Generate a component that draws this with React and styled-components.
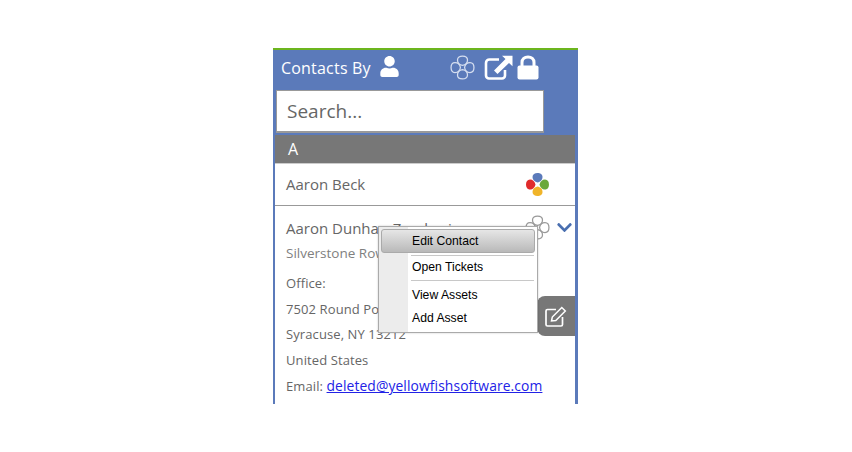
import styled, { createGlobalStyle } from "styled-components";
import { FaUser, FaChevronDown } from "react-icons/fa";

const GlobalStyle = createGlobalStyle`
  html, body {
    margin: 0;
    background: #fff;
    font-family: "Open Sans", sans-serif;
  }
`;

const Page = styled.div`
  width: 852px;
  height: 452px;
  padding: 48px 0 0 273px;
  box-sizing: border-box;
  overflow: hidden;
`;

const Panel = styled.div`
  position: relative;
  width: 305px;
  height: 356px;
  box-sizing: border-box;
  background: #5b7aba;
  border-top: 2px solid #6cb51e;
  padding: 0 3px 0 2px;
  overflow: hidden;
`;

const Header = styled.div`
  display: flex;
  align-items: center;
  height: 37px;
  color: #fff;
  padding: 0 0 1px 6px;
  box-sizing: border-box;
`;

const Title = styled.span`
  font-size: 16px;
  letter-spacing: 0.2px;
  line-height: 20px;
  margin-right: 8px;
`;

const UserWrap = styled.span`
  display: flex;
  margin-top: -4px;
`;

const HeaderIcons = styled.div`
  display: flex;
  align-items: center;
  margin-left: 50px;
  gap: 9px;
  margin-top: -2px;

  svg:last-child {
    margin-left: -5px;
  }
`;

const SearchBox = styled.input`
  display: block;
  width: 268px;
  height: 43px;
  margin: 3px 0 0 1px;
  box-sizing: border-box;
  border: 1px solid #999;
  border-width: 1px 1px 2px 1px;
  background: #fff;
  padding: 0 10px;
  font-family: "Open Sans", sans-serif;
  font-size: 19px;
  color: #555;
  outline: none;

  &::placeholder {
    color: #666;
    opacity: 1;
  }
`;

const SectionHeader = styled.div`
  height: 28px;
  margin-top: 2px;
  background: #777;
  color: #fff;
  font-size: 16px;
  font-weight: 500;
  line-height: 29px;
  padding-left: 13px;
`;

const List = styled.div`
  background: #fff;
  height: 242px;
  border-top: 1px solid #ccc;
`;

const ContactRow = styled.div`
  display: flex;
  align-items: center;
  justify-content: space-between;
  height: 42px;
  box-sizing: border-box;
  padding: ${(p) => (p.$divider ? "0 0 1px 11px" : "1px 2px 0 11px")};
  border-bottom: ${(p) => (p.$divider ? "1px solid #999" : "none")};
`;

const Name = styled.span`
  font-size: 15px;
  color: #666;
`;

const RowIcons = styled.div`
  display: flex;
  align-items: center;
  gap: 6px;
  padding-right: ${(p) => p.$pad || 0}px;
  color: #4a6fb0;
`;

const Details = styled.div`
  padding: 0 11px;
  margin-top: -5px;
`;

const Company = styled.div`
  font-size: 13.5px;
  line-height: 20px;
  color: #808080;
  margin-bottom: 8px;
`;

const DetailLine = styled.div`
  font-size: 13px;
  letter-spacing: 0.1px;
  line-height: 25.6px;
  color: #666;
  white-space: nowrap;
`;

const EmailLink = styled.a`
  font-size: 13.85px;
  color: #2222e6;
  text-decoration: underline;
`;

const Menu = styled.div`
  position: absolute;
  left: 105px;
  top: 176px;
  width: 160px;
  height: 107px;
  box-sizing: border-box;
  border: 1px solid #aaa;
  background: linear-gradient(to right, #ececec 0, #ececec 29px, #fff 29px);
  font-family: "Liberation Sans", Arial, sans-serif;
  font-size: 12.2px;
  color: #000;
  box-shadow: 0 0 2px rgba(0, 0, 0, 0.2);
`;

const MenuItem = styled.div`
  height: ${(p) => (p.$active ? "24px" : "23px")};
  line-height: ${(p) => (p.$active ? "22px" : "23px")};
  box-sizing: border-box;
  padding-left: ${(p) => (p.$active ? "30px" : "33px")};
  ${(p) =>
    p.$active &&
    `
    margin: 2px 2px 0;
    border: 1px solid #aaa;
    border-radius: 3px;
    background: linear-gradient(to bottom, #e6e6e6, #b9b9b9);
  `}
`;

const MenuDivider = styled.div`
  height: 1px;
  margin: ${(p) => p.$margin};
  margin-left: 32px;
  margin-right: 3px;
  background: #c8c8c8;
`;

const EditTab = styled.div`
  position: absolute;
  right: 3px;
  top: 246px;
  width: 38px;
  height: 40px;
  display: flex;
  align-items: center;
  justify-content: center;
  background: #777;
  border-radius: 8px 0 0 8px;
`;

const petal = "M12 10C9.200 9.600 7.200 7.400 7.200 4.800 7.200 2.200 9.400 1 12 1s4.800 1.200 4.800 3.800C16.800 7.400 14.800 9.600 12 10Z";

function Clover({ size = 24, colors, stroke }) {
  const fills = colors || ["none", "none", "none", "none"];
  return (
    <svg width={size} height={size} viewBox="0 0 24 24">
      <g stroke={stroke || "none"} strokeWidth={stroke ? 1.2 : 0}>
        {fills.map((fill, i) => (
          <path key={i} fill={fill} d={petal} transform={`rotate(${i * 90} 12 12)`} />
        ))}
      </g>
    </svg>
  );
}

function ExternalIcon() {
  return (
    <svg width="29" height="25" viewBox="0 0 29 25" fill="none">
      <path d="M15 4.500H5.500A3.500 3.500 0 0 0 2 8v12.500A3 3 0 0 0 5 23.500h13a3 3 0 0 0 3-3V15" stroke="#fff" strokeWidth="2.600" />
      <path d="M18 0.800H28.500V11.300L25 8 13.500 19 10 15.500 21.500 4Z" fill="#fff" />
    </svg>
  );
}

function LockIcon() {
  return (
    <svg width="22" height="25" viewBox="0 0 22 25" fill="none">
      <path d="M5 11V7.500C5 4 7.500 2 11 2s6 2 6 5.500V11" stroke="#fff" strokeWidth="3" />
      <rect x="0.500" y="10.500" width="21" height="14" rx="2" fill="#fff" />
    </svg>
  );
}

function EditIcon() {
  return (
    <svg width="22" height="21" viewBox="0 0 22 21" fill="none">
      <path d="M11 3.500H2.500A1.500 1.500 0 0 0 1 5v13.500A1.500 1.500 0 0 0 2.500 20H16a1.500 1.500 0 0 0 1.500-1.500V11" stroke="#fff" strokeWidth="1.700" />
      <path d="M6.500 15 7.300 11 16.800 1.500 20.300 5 10.800 14.500Z" stroke="#fff" strokeWidth="1.500" />
    </svg>
  );
}

export default function App() {
  return (
    <Page>
      <GlobalStyle />
      <Panel>
        <Header>
          <Title>Contacts By</Title>
          <UserWrap>
            <FaUser size={21} />
          </UserWrap>
          <HeaderIcons>
            <Clover size={25} stroke="#d5def0" />
            <ExternalIcon />
            <LockIcon />
          </HeaderIcons>
        </Header>
        <SearchBox placeholder="Search..." />
        <SectionHeader>A</SectionHeader>
        <List>
          <ContactRow $divider>
            <Name>Aaron Beck</Name>
            <RowIcons $pad={25}>
              <Clover size={25} colors={["#5b7aba", "#6aa83a", "#f0b429", "#e02b2b"]} />
            </RowIcons>
          </ContactRow>
          <ContactRow>
            <Name>Aaron DunhamZombari</Name>
            <RowIcons>
              <Clover size={25} stroke="#999" />
              <FaChevronDown size={17} />
            </RowIcons>
          </ContactRow>
          <Details>
            <Company>Silverstone Row</Company>
            <DetailLine>Office:</DetailLine>
            <DetailLine>7502 Round Pond Rd</DetailLine>
            <DetailLine>Syracuse, NY 13212</DetailLine>
            <DetailLine>United States</DetailLine>
            <DetailLine>
              Email: <EmailLink href="#">deleted@yellowfishsoftware.com</EmailLink>
            </DetailLine>
          </Details>
        </List>
        <EditTab>
          <EditIcon />
        </EditTab>
        <Menu>
          <MenuItem $active>Edit Contact</MenuItem>
          <MenuDivider $margin="2px 0 0" />
          <MenuItem>Open Tickets</MenuItem>
          <MenuDivider $margin="1px 0 3px" />
          <MenuItem>View Assets</MenuItem>
          <MenuItem>Add Asset</MenuItem>
        </Menu>
      </Panel>
    </Page>
  );
}
